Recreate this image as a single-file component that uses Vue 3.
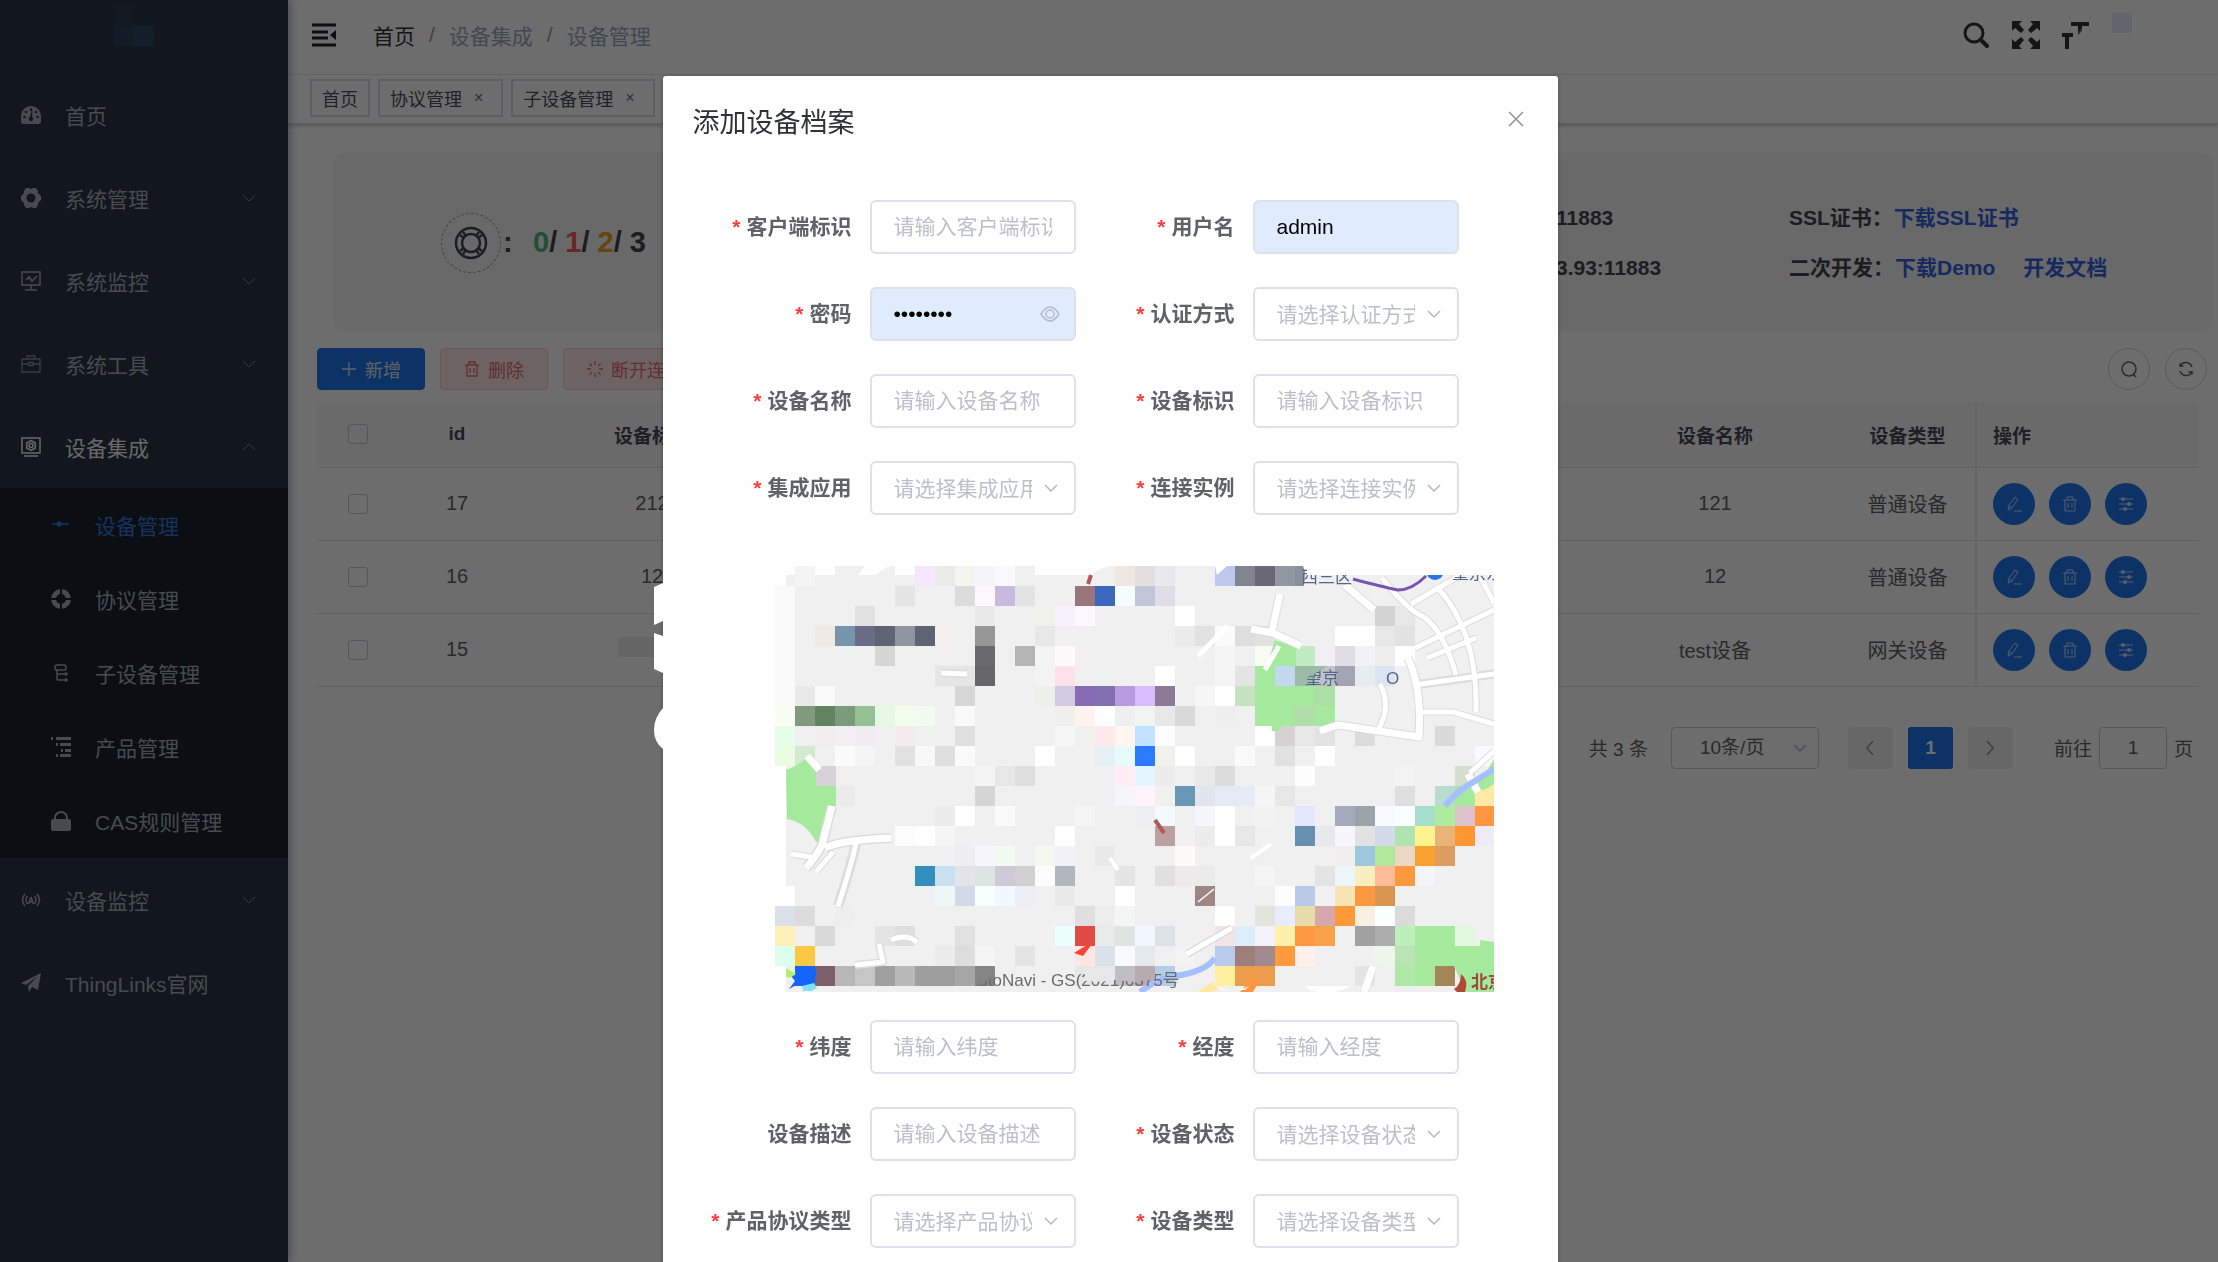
<script setup>
import { ref } from 'vue'

const topMenu = [
  { label: '首页', icon: 'dash' },
  { label: '系统管理', icon: 'gear', arrow: true },
  { label: '系统监控', icon: 'monitor', arrow: true },
  { label: '系统工具', icon: 'tool', arrow: true },
  { label: '设备集成', icon: 'device', arrow: true, open: true },
]
const subMenu = [
  { label: '设备管理', icon: 'link', active: true },
  { label: '协议管理', icon: 'ring' },
  { label: '子设备管理', icon: 'tree' },
  { label: '产品管理', icon: 'list' },
  { label: 'CAS规则管理', icon: 'lock' },
]
const lowMenu = [
  { label: '设备监控', icon: 'signal', arrow: true },
  { label: 'ThingLinks官网', icon: 'plane' },
]

const rows = [
  { id: 17, code: '212', name: '121', type: '普通设备' },
  { id: 16, code: '12', name: '12', type: '普通设备' },
  { id: 15, code: '', name: 'test设备', type: '网关设备' },
]

const topFields = [
  { id: 'client', label: '客户端标识', kind: 'text', ph: '请输入客户端标识', req: true },
  { id: 'user', label: '用户名', kind: 'text', ph: '请输入用户名', req: true, value: 'admin', filled: true },
  { id: 'pwd', label: '密码', kind: 'password', ph: '请输入密码', req: true, value: 'password', filled: true },
  { id: 'auth', label: '认证方式', kind: 'select', ph: '请选择认证方式', req: true },
  { id: 'name', label: '设备名称', kind: 'text', ph: '请输入设备名称', req: true },
  { id: 'code', label: '设备标识', kind: 'text', ph: '请输入设备标识', req: true },
  { id: 'app', label: '集成应用', kind: 'select', ph: '请选择集成应用', req: true },
  { id: 'conn', label: '连接实例', kind: 'select', ph: '请选择连接实例', req: true },
]
const bottomFields = [
  { id: 'lat', label: '纬度', kind: 'text', ph: '请输入纬度', req: true },
  { id: 'lng', label: '经度', kind: 'text', ph: '请输入经度', req: true },
  { id: 'desc', label: '设备描述', kind: 'text', ph: '请输入设备描述' },
  { id: 'state', label: '设备状态', kind: 'select', ph: '请选择设备状态', req: true },
  { id: 'proto', label: '产品协议类型', kind: 'select', ph: '请选择产品协议类型', req: true },
  { id: 'type', label: '设备类型', kind: 'select', ph: '请选择设备类型', req: true },
]
const pageSize = ref('10')

// Map tiles, one string per 20px row; each entry is column[-lastColumn]:colour
const tileRows = [
  '1:f4f4f4 3-5:f0f0f0 7:f7e7fc 8:e8ebe6 9:f2f4ee 10:f5f4f9 11:fafafa 12:f0f0f0 17:f0e6e2 18:e4dee0 19:e9e8ea 20-21:f0f0f0 22:bec7ed 23:80858f 24:686876 25:9198a2',
  '0:fafafa 6:e5e5e5 9:dcdcdc 10:fdf7fe 11:c8badf 12:e3e3e3 15:99757c 16:3b68bd 17:f6fdff 18:c0c5da 19:dedde8',
  '0:fafafa 4:e1e1e1 10:e9e9e9 13:f0f1e8 14:f6f1fd 15:fdf8fe 20:ffffff 30:d3d3d3 31:e7e7e7',
  '0:fafafa 2:efeae6 3:7695ad 4:696c87 5:5e6474 6:8f94a1 7:5e6474 8:f2efed 10:979797 13:e8e8e8 20:ebebeb 21:e2e2e2 22:fbfbfb 23:dedede 24:e2e2e2 28-29:ffffff 30:e7e7e7 31:e2e2e2',
  '0:fafafa 4:eef1ed 5:d6d6d6 6-7:f0f0ed 10:69696b 12:b4b4b4 13:f3f3f3 14:fffafa 22:f5f5f5 24:f8fbf3 26:c0ebc4 27:f1eff5 28:dfdee3 29:f2f1f6 30:eeefed 31:fefefe',
  '0:fafafa 8-9:e6e6e6 10:666668 13:f3f3f3 14:fce1ea 19:ffffff 22:f5f5f5 23:e4e4e4 24:a5e99d 25:c3d7ef 26:9dbba7 27:bfc3cb 28:a3a5b5 29:e6edf1 30:dbe5f3',
  '0:fafafa 1:e9e9e9 2:fafafa 9:d7d7d7 13:edf0e9 14:d1cae0 15:876bb5 16:8270b2 17:b79adf 18:d9bcff 19:8b7b98 21:f6f6f6 22:ffffff 23:c7e2c3 24-26:a5e99d 27:abdfa5',
  '0:f8fff5 1:7f9a7d 2:628460 3:7b9b7b 4:95c093 5:e4f8e2 6:f1feea 7:f1fcf0 9:f9f9f9 14:efefec 15:fff2ef 16:fffeff 17:efeff0 18:f2f4f2 19:e8e8e9 20:d9d9d9 22:eeeeee 24-25:a5e99d 26:b1ddab 27:a5e99d',
  '0:e4fee7 2:f2eef0 4:efedf2 6:f4ebee 9:e0e0e0 14:f6f6f6 16:ffe9ed 17:fff6f0 18:c1e3ff 19:fbfdff 24:fefefe 25:d5d3d2 26:e8e8e8 27:e3e3e3 29:dcdcdc 33:dadada',
  '0:e9fee0 1:d3ead0 3:fbfbfb 4:f5f5f5 6:e1e1e1 7:f8f8f8 8:dedede 9:fafafa 13:ffffff 16:e6f0f2 17:e9faff 18:2c7bff 19:f0f1ea 20:ffffff 23:fafafa 25:e1e1e1 27:ffffff 35:faf9fc',
  '2:d7d2d9 10:f4f4f4 11:e8e8e8 12:dedede 17:ffedf6 18:e4f5ff 19:ececec 21:e9e9e9 22:dcdcdc 26:fdfdfd 31:f3f3f3 34:d5dfcf',
  '2:a5e099 3:ebebec 10:d5d5d5 17:f6f5fa 18:fff4fa 20:6998b7 21:e1e5ee 22-23:e6eaf5 24:f5f5f5 25:e7e7e7 31:dfdfdf 33:b9dcd1 34:a5e99d 35:fde9a5',
  '8:ececec 9:ffffff 11:fafafa 15:f5f5f5 18:edf0f1 19:f4f9ff 21:f4f7fc 22:fdffff 24:f2f2f2 26:e4e6fe 28:a4aabd 29:9ba4ab 30:f7fbff 31:f8ffff 32:a6dece 33:afeb9c 34:ddc2cb 35:ff9740',
  '6:fcfcfc 7:ffffff 8:f5f5f5 14:ffffff 19:bba0a0 21:ececec 22:ffffff 23:e7e7e7 26:6790b0 27:e8e8ef 28:f7f7fb 29:e2e2e2 30:d3dae9 31:b0e3b2 32:fff38f 33:eab479 34:ff9632 35:eeeaf6',
  '9:eeedf2 10:f5f5fb 11:f3faef 13:f3f9f1 14:f2f1f8 16:e9e9e9 20:fffafa 28:f0eeee 29:9ec7dd 30:b2e899 31:ecd7c5 32:faa02f 33:dc9d5e',
  '7:3390be 8:c8e0ef 9:e3e3e9 10:dde5e3 11:cecbd7 12:d1d1d1 13:fdfcff 14:b2b7bf 17:e5e5e5 19:e0e0e0 20:eee9eb 21:ebebeb 24:f5f5f5 27:e4e4e4 28:ecf5fb 29:f9efbe 30:ffbb97 31:fd9a3b 32:f5f4fb',
  '0:fffffb 8:eef7f5 9:d4d9e9 10:f8ffff 11:f2f8ff 12:edeff5 14:e9e9e9 17:ffffff 21:9f8685 25:fdfcff 26:b9c9e7 28:f6e4b5 29:fc9842 30:d99650',
  '0:dbe0e9 1:dcdcdc 3:eeeeee 15:dfdfdf 16:ededed 17:f4f5f5 22:fffffb 24:e2e4de 25:e7edfd 26:e5dcaa 27:d5a9ab 28:ff9838 29:f8efe0 30:f9fffd 31:dbdbdb',
  '0:fff0ba 2:d9d9d9 5:e4e4e4 6:dfdfdf 9:e1e1e1 14:ecfefc 15:e14b45 16:e7ece9 17:dee4e2 18:f2f6ff 19:dde2e6 22:f4e3e4 23:dcedfc 24:f4f2f8 25:fff0ab 26:ff9840 27:f9a04b 29:a1a1a1 30:adadad 31:bdefba 32-33:a5e99d 34:e3f7e1',
  '0:dcffec 1:fac844 8:ececec 9:dddddd 10:f5f5f5 12:e4e4e4 15:ffe6e2 16:d9e2eb 17:f8faff 18:e4e9ec 20:f3f3f3 22:b9cbec 23:9e7e78 24:a28b8f 25:ff9b3d 26:fff0ec 30:eef6eb 31:bbe4b6 32-34:a5e99d',
  '1:1564fb 2:7e5e69 3:b7b7b7 4:c6c6c6 5:9f9f9f 6:b9b9b9 7-8:9e9e9e 9:a6a6a6 10:858585 15:e7e7e7 16:e5e5e5 17:bfbfc1 18:b8abb0 19:b3cde9 22:fdf1a0 23-24:eb9d4b 29:e4e4e4 31:afe9a7 32:a5e99d 33:a48555',
]
const tiles = tileRows.flatMap((line, r) =>
  line.split(' ').map((cell) => {
    const [span, colour] = cell.split(':')
    const [a, b = a] = span.split('-').map(Number)
    return { x: a * 20, y: r * 20, w: (b - a + 1) * 20, fill: '#' + colour }
  })
)
</script>

<template>
  <div class="app">
    <nav class="sidebar" aria-label="主菜单">
      <div class="logo">
        <svg width="60" height="60" viewBox="0 0 60 60" aria-hidden="true">
          <path fill="#2a3d49" d="M20 6h20v20H20z" />
          <path fill="#2c405a" d="M20 26h20v20H20z" />
          <path fill="#2b4860" d="M40 26h20v20H40z" />
        </svg>
      </div>
      <template v-for="(group, g) in [topMenu, subMenu, lowMenu]" :key="g">
        <ul :class="['menu', { sub: g === 1 }]">
          <li v-for="m in group" :key="m.label">
            <a href="#" :class="['item', { active: m.active, open: m.open }]">
              <svg class="mi" viewBox="0 0 20 20" aria-hidden="true">
                <template v-if="m.icon === 'dash'">
                  <path fill="currentColor" d="M10 1A10 10 0 0 0 0 11v6q0 2 2 2h16q2 0 2-2v-6A10 10 0 0 0 10 1z" />
                  <g fill="#283644"><circle cx="10" cy="4.500" r="1.300" /><circle cx="5" cy="7" r="1.300" /><circle cx="15" cy="7" r="1.300" /><circle cx="3.500" cy="12" r="1.300" /><circle cx="16.500" cy="12" r="1.300" /><path d="M10.500 6l1 .3-.5 5.500a2.300 2.300 0 1 1-2 0z" /></g>
                </template>
                <path v-else-if="m.icon === 'gear'" fill="currentColor" fill-rule="evenodd" d="M5 0h3l2 1 2-1h3l2 3v2l3 3v4l-3 3v2l-2 3h-3l-2-1-2 1H5l-2-3v-2l-3-3V8l3-3V3zM10 5.500a4.500 4.500 0 1 0 0 9 4.500 4.500 0 0 0 0-9z" />
                <path v-else-if="m.icon === 'monitor'" fill="none" stroke="currentColor" stroke-width="1.500" d="M1 1h18v13H1zM10 14v5M4 19h12M5 9l3-3 3 4 5-5" />
                <path v-else-if="m.icon === 'tool'" fill="none" stroke="currentColor" stroke-width="1.300" d="M1 5h18v13H1zM6 5V2h8v3M1 10h7m4 0h7M8 8.500h4v3H8z" opacity=".75" />
                <g v-else-if="m.icon === 'device'" fill="none" stroke="currentColor" stroke-width="1.500"><path d="M1 1h18v15H1zM3 19h14" /><path d="M10 3.500l4.300 2.500v5L10 13.500 5.700 11V6z" /><circle cx="10" cy="8.500" r="2" /></g>
                <g v-else-if="m.icon === 'link'"><path stroke="currentColor" stroke-width="1.500" d="M1 9h17" /><circle cx="8" cy="9" r="2.600" fill="currentColor" /></g>
                <g v-else-if="m.icon === 'ring'"><circle cx="10" cy="10" r="7.500" fill="none" stroke="currentColor" stroke-width="5" /><path stroke="#1a232d" stroke-width="2" d="M10 0v20M0 10h20" /></g>
                <g v-else-if="m.icon === 'tree'" fill="none" stroke="currentColor" stroke-width="1.500"><rect x="4" y="2" width="11" height="5" rx="2" /><path d="M6 7v9q0 1 1 1h7M7 11h8" /><circle cx="15" cy="11" r="1" /><circle cx="15" cy="17" r="1" /></g>
                <path v-else-if="m.icon === 'list'" fill="currentColor" d="M0 0h2v3H0zM5 0h15v3H5zM5 6h2v3H5zM9 6h11v3H9zM10 12h2v3h-2zM14 12h6v3h-6zM5 17h2v3H5zM9 17h11v3H9z" />
                <path v-else-if="m.icon === 'lock'" fill="currentColor" fill-rule="evenodd" d="M3 8V7a7 7 0 0 1 14 0v1h1q2 0 2 2v8q0 2-2 2H2q-2 0-2-2v-8q0-2 2-2zM5 8h10V7A5 5 0 0 0 5 7z" />
                <path v-else-if="m.icon === 'signal'" fill="none" stroke="currentColor" stroke-width="1.500" d="M4 4q-5 6 0 12M16 4q5 6 0 12M6.500 6q-3 4 0 8M13.500 6q3 4 0 8M10 7l-2.500 7M10 7l2.500 7M8 12h4" />
                <path v-else fill="currentColor" d="M20 0l-3 17-6-3-3 5-1-6L17 3 5 12l-5-2z" />
              </svg>
              <span>{{ m.label }}</span>
              <svg v-if="m.arrow" class="arrow" viewBox="0 0 14 14" aria-hidden="true">
                <path fill="none" stroke="currentColor" :d="m.open ? 'M1 10l6-6 6 6' : 'M1 4l6 6 6-6'" />
              </svg>
            </a>
          </li>
        </ul>
      </template>
    </nav>

    <main class="main">
      <header class="navbar">
        <svg class="fold" width="24" height="24" viewBox="0 0 24 24" aria-hidden="true">
          <path stroke="#202124" stroke-width="3" d="M0 2h24M0 9h16M0 15h16M0 22h24" />
          <path fill="#202124" d="M24 7v10l-6-5z" />
        </svg>
        <div class="crumbs">
          <a href="#" class="home">首页</a><i>/</i><span>设备集成</span><i>/</i><span>设备管理</span>
        </div>
        <div class="tools">
          <svg width="28" height="28" viewBox="0 0 28 28" aria-hidden="true"><circle cx="12" cy="12" r="9" fill="none" stroke="#333" stroke-width="3" /><path stroke="#333" stroke-width="4" stroke-linecap="round" d="M19 19l6 6" /></svg>
          <svg width="28" height="28" viewBox="0 0 28 28" fill="#333" aria-hidden="true"><path d="M0 0h10L7 3l5 6-3 3-6-5-3 3zM28 0H18l3 3-5 6 3 3 6-5 3 3zM0 28h10l-3-3 5-6-3-3-6 5-3-3zM28 28H18l3-3-5-6 3-3 6 5 3-3z" /></svg>
          <svg width="28" height="28" viewBox="0 0 28 28" fill="#333" aria-hidden="true"><path d="M9 1h18v4h-7v5l-4 4V5H9zM0 12h11v4H7v12H3V16H0z" /><path fill="#fff" fill-opacity=".3" d="M14 14l6-7h10v21H12z" /></svg>
          <span class="avatar"></span>
        </div>
      </header>

      <div class="tags">
        <a href="#" class="tag">首页</a>
        <a href="#" class="tag">协议管理<b>×</b></a>
        <a href="#" class="tag">子设备管理<b>×</b></a>
      </div>

      <section class="panel">
        <div class="status">
          <span class="dash">
            <svg width="34" height="34" viewBox="0 0 34 34" fill="none" stroke="#42454f" stroke-width="2.500" aria-hidden="true"><circle cx="17" cy="17" r="15" /><circle cx="17" cy="17" r="9" /><path d="M6 9l4 3M9 6l3 4M28 9l-4 3M25 6l-3 4M6 25l4-3M9 28l3-4M28 25l-4-3M25 28l-3-4" /></svg>
          </span>
          <span class="colon">:</span>
          <span class="counts"><em class="g">0</em>/ <em class="r">1</em>/ <em class="y">2</em>/ 3</span>
        </div>
        <div class="endpoints"><p>11883</p><p>3.93:11883</p></div>
        <div class="downloads">
          <p>SSL证书：<a href="#">下载SSL证书</a></p>
          <p>二次开发：<a href="#">下载Demo</a><a href="#" class="doc">开发文档</a></p>
        </div>
      </section>

      <div class="actions">
        <button type="button" class="btn primary">
          <svg width="16" height="16" viewBox="0 0 16 16" aria-hidden="true"><path stroke="currentColor" stroke-width="1.300" d="M1 8h14M8 1v14" /></svg>新增
        </button>
        <button type="button" class="btn danger">
          <svg width="16" height="16" viewBox="0 0 16 16" fill="none" stroke="currentColor" stroke-width="1.300" aria-hidden="true"><path d="M1 4h14M5 4V1h6v3M3 4v11h10V4M6 7v5M10 7v5" /></svg>删除
        </button>
        <button type="button" class="btn danger">
          <svg width="16" height="16" viewBox="0 0 16 16" stroke="currentColor" stroke-width="1.300" aria-hidden="true"><path d="M8 0v4M8 12v4M0 8h4M12 8h4M2.500 2.500l2.500 2.500M11 11l2.500 2.500M2.500 13.500L5 11M11 5l2.500-2.500" /></svg>断开连接
        </button>
        <button type="button" class="round first" aria-label="搜索">
          <svg width="18" height="18" viewBox="0 0 18 18" fill="none" stroke="currentColor" stroke-width="1.500" aria-hidden="true"><circle cx="9" cy="9" r="7" /><path d="M13 14l3 3" /></svg>
        </button>
        <button type="button" class="round" aria-label="刷新">
          <svg width="18" height="18" viewBox="0 0 18 18" fill="none" stroke="currentColor" stroke-width="1.500" aria-hidden="true"><path d="M3 7V3.500M3 6h3.500M3 6a6.500 6.500 0 0 1 12 1M15 11v3.500M15 12h-3.500M15 12a6.500 6.500 0 0 1-12-1" /></svg>
        </button>
      </div>

      <table class="grid">
        <colgroup><col class="c1" /><col class="c2" /><col class="c3" /><col /><col class="c5" /><col class="c6" /><col class="c7" /></colgroup>
        <thead>
          <tr>
            <th><input type="checkbox" aria-label="全选" /></th>
            <th>id</th><th>设备标识</th><th></th><th>设备名称</th><th>设备类型</th><th class="ops">操作</th>
          </tr>
        </thead>
        <tbody>
          <tr v-for="r in rows" :key="r.id">
            <td><input type="checkbox" :aria-label="'选择 ' + r.id" /></td>
            <td>{{ r.id }}</td>
            <td><span v-if="r.code">{{ r.code }}</span><span v-else class="masked"></span></td>
            <td></td>
            <td>{{ r.name }}</td>
            <td>{{ r.type }}</td>
            <td class="ops">
              <div class="circles">
                <button type="button" aria-label="编辑"><svg viewBox="0 0 16 16" aria-hidden="true"><path d="M2 14l1-5 6-8 3 2-6 9zM3 9.500l3 2.500M8 15h8" /></svg></button>
                <button type="button" aria-label="删除"><svg viewBox="0 0 16 16" aria-hidden="true"><path d="M1 4h14M5 4V1h6v3M3 4v11h10V4M6 7v5M10 7v5" /></svg></button>
                <button type="button" aria-label="设置"><svg viewBox="0 0 16 16" aria-hidden="true"><path d="M1 3h14M1 8h14M1 13h14" /><g fill="#c8dcff" stroke="none"><circle cx="5" cy="3" r="2" /><circle cx="11" cy="8" r="2" /><circle cx="7" cy="13" r="2" /></g></svg></button>
              </div>
            </td>
          </tr>
        </tbody>
      </table>

      <div class="pager">
        <span>共 3 条</span>
        <span class="size">
          <select v-model="pageSize" aria-label="每页条数"><option value="10">10条/页</option><option value="20">20条/页</option></select>
          <svg class="chev" viewBox="0 0 14 14" aria-hidden="true"><path d="M1 4l6 6 6-6" /></svg>
        </span>
        <button type="button" class="pg" aria-label="上一页"><svg width="14" height="18" viewBox="0 0 14 18" aria-hidden="true"><path d="M10 2L4 9l6 7" /></svg></button>
        <button type="button" class="pg on">1</button>
        <button type="button" class="pg" aria-label="下一页"><svg width="14" height="18" viewBox="0 0 14 18" aria-hidden="true"><path d="M4 2l6 7-6 7" /></svg></button>
        <label class="jump">前往<input type="text" value="1" />页</label>
      </div>
    </main>

    <div class="overlay">
      <div class="dialog" role="dialog" aria-label="添加设备档案">
        <svg class="edge" width="9" height="170" viewBox="0 0 9 170" aria-hidden="true">
          <path fill="#fff" d="M0 4l9-4v38l-9 4zM0 50l9 3v37l-9-4zM9 125q-9 10-9 22t9 19z" />
        </svg>
        <div class="head">
          <h1>添加设备档案</h1>
          <button type="button" class="close" aria-label="关闭"><svg width="16" height="16" viewBox="0 0 16 16" aria-hidden="true"><path fill="none" stroke="#909399" stroke-width="1.500" d="M1 1l14 14M15 1L1 15" /></svg></button>
        </div>
        <form @submit.prevent>
          <template v-for="(fields, f) in [topFields, bottomFields]" :key="f">
            <div class="fields">
              <div v-for="x in fields" :key="x.id" class="field">
                <label :for="x.id"><i v-if="x.req">*</i>{{ x.label }}</label>
                <div class="ctl">
                  <select v-if="x.kind === 'select'" :id="x.id"><option value="">{{ x.ph }}</option></select>
                  <input v-else :id="x.id" :type="x.kind" :placeholder="x.ph" :value="x.value" :class="{ filled: x.filled }" />
                  <svg v-if="x.kind === 'select'" class="chev" viewBox="0 0 14 14" aria-hidden="true"><path d="M1 4l6 6 6-6" /></svg>
                  <svg v-if="x.kind === 'password'" class="eye" viewBox="0 0 20 16" aria-hidden="true"><path d="M1 8q9-14 18 0-9 14-18 0z" /><circle cx="10" cy="8" r="4" /></svg>
                </div>
              </div>
            </div>

            <svg v-if="f === 0" class="map" width="719" height="426" viewBox="0 0 719 426" role="img" aria-label="地图">
              <path fill="#f0f0f0" d="M11 9H719V426H11z" />
              <path fill="#fff" d="M257 0H400V9H257z" />
              <path fill="#f0f0f0" d="M316 9q10-9 24-9v20h-24z" />
              <rect v-for="(t, i) in tiles" :key="i" :x="t.x" :y="t.y" :width="t.w" height="20" :fill="t.fill" />
              <path fill="#8a909b" d="M520 0h8l2 5-1 15h-9z" />
              <path fill="#fff" d="M90 0h24l-14 9H83zM440 0h12l-10 9z" />

              <!-- parks -->
              <path fill="#a5e99d" d="M11 204q12-4 20-12l10 8v20h20v20h-5l-10 36h-5q-10-20-29-23z" />
              <path fill="#d7d2d9" d="M41 202l8-2h12v20H41z" />
              <path fill="#a5e99d" d="M500 74l21 7v19h-21l-8 20v-20zM497 160h10l-4 5h-6zM705 374l14 2v50h-34v-12l-6-14h-22v-20h48zM719 193v27l-20 7-6 13h-15l10-20 22-12z" />

              <!-- roads -->
              <g fill="none" stroke="#dcdcdc" stroke-linejoin="round">
                <path stroke-width="10" d="M57 240l-10 39q-6 12-16 23M50 282q15-8 66-10M81 277q-4 20-18 63" />
                <path stroke-width="9" d="M505 28l-8 37M476 63l22 4 28 13M570 19q14 12 29 25M633 92q14 30 11 79l-81-12-18 6M639 119l80-11" />
                <path stroke-width="7" d="M16 288l26 4M41 306l17-20M636 38l48-28M607 12q25 32 42 39 20 15 32 58M661 20q42 44 40 126M640 82l79-38M652 92l49-20M605 118q12 22-2 46M648 146h30l41 12M706 12l13 25M719 185l-24 22" />
                <path stroke-width="8" d="M693 208l10 18M598 400l-9 26M412 388l45-26M80 399l28-3-4-18M116 374q15-7 26 2M166 107l26 1" />
              </g>
              <g fill="none" stroke="#fff" stroke-linejoin="round">
                <path stroke-width="7" d="M57 240l-10 39q-6 12-16 23M50 282q15-8 66-10M505 28l-8 37M476 63l22 4 28 13M570 19q14 12 29 25M633 92q14 30 11 79l-81-12-18 6M693 208l10 18M598 400l-9 26M32 190l12 14" />
                <path stroke-width="5" d="M81 277q-4 20-18 63M16 288l26 4M41 306l17-20M636 38l48-28M607 12q25 32 42 39 20 15 32 58M661 20q42 44 40 126M640 82l79-38M652 92l49-20M605 118q12 22-2 46M648 146h30l41 12M706 12l13 25M719 185l-24 22M639 119l80-11M412 388l45-26M80 399l28-3-4-18M116 374q15-7 26 2M166 107l26 1M490 104l14-24M423 90l30-30" />
                <path stroke-width="4" d="M335 292l8 12M476 292l20-14" />
              </g>
              <path fill="none" stroke="#a5c0ff" stroke-width="6" d="M365 426q18-14 35-16 30-4 40-18M670 240q10-14 30-25l19-12" />
              <path fill="#ffe9a0" d="M422 426l15-10 7 7-8 3zM707 226l12-8v10z" />
              <path fill="#ff9740" d="M465 426l11-13 10-1-8 14z" />
              <path fill="none" stroke="#7a55b0" stroke-width="3" d="M578 13q30 8 45 11 14 0 28-14" />
              <circle cx="660" cy="5" r="9" fill="#2c73e8" />
              <path stroke="#b05a5a" stroke-width="4" d="M313 18l3-9M380 254l9 13" />
              <path stroke="#fff" stroke-width="1.500" d="M423 336l16-13" />
              <path fill="#fb4438" d="M299 387l21-13-12 16z" />
              <path fill="#1564fb" d="M16 410l24-8 2 8-10 6 2 6-9-5-11 6 6-8z" />
              <path fill="#7fe3ff" d="M27 420l12-3 3 5-6 3h-8z" />
              <path fill="#b3f070" d="M11 402l10 6-6 4-4-1z" />
              <path fill="#fff" d="M530 420h45q-8 6-20 6h-10q-10 0-15-6zM440 420q20 8 34 0l-4 4h-22z" />

              <!-- place names -->
              <g class="place">
                <text x="526" y="17">西三区</text>
                <text x="677" y="13">望京东</text>
                <text x="530" y="118">望京</text>
                <text x="611" y="118">O</text>
              </g>
              <path fill="#fff" d="M532 0h187v9H532z" />
              <path fill="#9dbba7" d="M528 100h25l-25 14z" />
              <text class="credit" x="192" y="420">AutoNavi - GS(2021)6375号</text>
              <path fill="#a6a6a6" d="M180 400h20v20h-20z" />
              <path fill="#858585" d="M200 400h20l-4 12-16 8z" />
              <path fill="#e7e7e7" d="M310 400h30v14q-14 3-30 1z" />
              <path fill="#bfbfc1" d="M340 400h20v16l-20-2z" />
              <path fill="#b8abb0" d="M360 400h20v13l-20 3z" />
              <path fill="#b04a36" d="M686 408q8 6 4 18h-8l-3-3q7-4 7-15z" />
              <text class="rail" x="696" y="422">北京</text>
            </svg>
          </template>
        </form>
      </div>
    </div>
  </div>
</template>

<style>
body {
  background: #fff;
}
</style>

<style scoped>
.app {
  display: flex;
  min-height: 100vh;
  font-family: "Liberation Sans", "Noto Sans CJK SC", sans-serif;
  font-size: 20px;
  color: #606266;
}
.app * {
  box-sizing: border-box;
}
button,
input,
select {
  font-family: inherit;
}
a {
  color: inherit;
  text-decoration: none;
}
i,
em {
  font-style: normal;
}

/* sidebar */
.sidebar {
  position: relative;
  z-index: 1;
  flex: 0 0 288px;
  background: #283644;
  box-shadow: 2px 0 9px rgba(0, 21, 41, 0.35);
}
.logo {
  height: 73px;
  padding-left: 94px;
}
.menu {
  list-style: none;
  margin: 0;
  padding: 0;
}
.item {
  display: flex;
  align-items: center;
  height: 83px;
  padding: 0 32px 0 21px;
  font-size: 21px;
  color: #a6adb8;
}
.item.open {
  color: #f4f4f5;
}
.mi {
  width: 20px;
  height: 20px;
  margin-right: 24px;
  flex: none;
}
.arrow {
  width: 14px;
  height: 14px;
  margin-left: auto;
  color: #7d8590;
}
.sub {
  background: #1a232d;
}
.sub .item {
  height: 74px;
  padding-left: 51px;
}
.sub .item.active {
  color: #3278dc;
}

/* top bars */
.main {
  flex: 1;
  min-width: 0;
}
.navbar {
  display: flex;
  align-items: center;
  height: 75px;
  padding: 0 86px 4px 24px;
  border-bottom: 1px solid #f0f0f2;
}
.crumbs {
  display: flex;
  align-items: center;
  margin-left: 37px;
  font-size: 21px;
  color: #97a8be;
}
.crumbs .home {
  color: #303133;
}
.crumbs i {
  margin: 0 14px;
  color: #999;
}
.tools {
  display: flex;
  gap: 22px;
  margin-left: auto;
}
.avatar {
  width: 20px;
  height: 20px;
  margin-top: -8px;
  background: #e6edff;
}
.tags {
  display: flex;
  gap: 8px;
  height: 49px;
  padding: 4px 22px;
  border-bottom: 1px solid #d8dce5;
  box-shadow: 0 2px 4px rgba(0, 0, 0, 0.2);
}
.tag {
  display: flex;
  align-items: center;
  height: 38px;
  padding: 0 10px;
  border: 2px solid #d8dce5;
  font-size: 18px;
  color: #495060;
}
.tag b {
  margin: 0 8px 0 12px;
  font-size: 16px;
  font-weight: 400;
  color: #70757f;
}

/* info panel */
.panel {
  display: flex;
  align-items: center;
  height: 179px;
  margin: 29px 5px 0 45px;
  padding: 0 109px 0 108px;
  border-radius: 12px;
  background: #f6f6f6;
  font-size: 21px;
  font-weight: 700;
  color: #42454f;
}
.status {
  display: flex;
  align-items: center;
  flex: 1;
  font-size: 29px;
}
.dash {
  display: grid;
  place-items: center;
  width: 60px;
  height: 60px;
  border: 1px dashed #999;
  border-radius: 50%;
}
.colon {
  width: 32px;
  padding-left: 2px;
}
.g {
  color: #4cb97c;
}
.r {
  color: #f05a5e;
}
.y {
  color: #e6a020;
}
.endpoints {
  width: 233px;
}
.downloads {
  width: 315px;
}
.panel p {
  margin: 0;
  line-height: 50px;
  white-space: nowrap;
}
.downloads a {
  margin-left: 1px;
  color: #3564de;
}
.downloads .doc {
  margin-left: 28px;
}

/* action bar */
.actions {
  display: flex;
  gap: 15px;
  padding: 16px 11px 12px 29px;
}
.btn {
  display: flex;
  align-items: center;
  justify-content: center;
  gap: 8px;
  height: 42px;
  padding: 0 23px;
  border: 1px solid;
  border-radius: 4px;
  font-size: 18px;
}
.primary {
  background: #1f76ee;
  border-color: #1f76ee;
  color: #e4e8f0;
}
.danger {
  background: #ffe8e8;
  border-color: #ffc8c8;
  color: #e66c6c;
}
.round {
  display: grid;
  place-items: center;
  width: 42px;
  height: 42px;
  padding: 0;
  border: 1px solid #d0d2d6;
  border-radius: 50%;
  background: none;
  color: #606266;
}
.round.first {
  margin-left: auto;
}

/* table */
.grid {
  width: calc(100% - 48px);
  margin-left: 29px;
  border-collapse: collapse;
  table-layout: fixed;
  text-align: center;
}
.c1 {
  width: 82px;
}
.c2 {
  width: 116px;
}
.c3 {
  width: 274px;
}
.c5 {
  width: 250px;
}
.c6 {
  width: 136px;
}
.c7 {
  width: 223px;
}
.grid th {
  height: 65px;
  padding: 0;
  background: #f8f8f9;
  border-bottom: 1px solid #dce3ea;
  font-size: 19px;
  color: #484b58;
}
.grid td {
  height: 73px;
  padding: 0;
  border-bottom: 1px solid #dfe3e8;
}
.grid .ops {
  padding-left: 16px;
  text-align: left;
  border-left: 2px solid #ececec;
}
.grid input {
  appearance: none;
  display: block;
  width: 20px;
  height: 20px;
  margin: 0 auto;
  border: 1px solid #c8cad0;
  border-radius: 3px;
}
.masked {
  display: inline-block;
  width: 66px;
  height: 20px;
  background: #ececec;
}
.circles {
  display: flex;
  gap: 14px;
}
.circles button {
  display: grid;
  place-items: center;
  width: 42px;
  height: 42px;
  padding: 0;
  border: 0;
  border-radius: 50%;
  background: #1f76ee;
}
.circles svg {
  width: 16px;
  height: 16px;
  fill: none;
  stroke: #c8dcff;
  stroke-width: 1px;
}

/* pagination */
.pager {
  display: flex;
  align-items: center;
  justify-content: flex-end;
  gap: 15px;
  padding: 40px 25px 0 0;
  font-size: 19px;
}
.size {
  position: relative;
  margin: 0 14px 0 8px;
}
.size select {
  appearance: none;
  width: 148px;
  height: 42px;
  padding: 0 54px 0 28px;
  border: 1px solid #c8cad0;
  border-radius: 4px;
  background: none;
  font-size: 19px;
  color: #606266;
}
.chev {
  position: absolute;
  top: 50%;
  right: 18px;
  width: 14px;
  height: 14px;
  margin-top: -7px;
  fill: none;
  stroke: #b4b8c0;
  stroke-width: 1.500px;
  pointer-events: none;
}
.size .chev {
  right: 12px;
}
.pg {
  display: grid;
  place-items: center;
  width: 45px;
  height: 42px;
  padding: 0;
  border: 0;
  border-radius: 3px;
  background: #f2f2f3;
  font-size: 19px;
}
.pg svg {
  fill: none;
  stroke: #909399;
  stroke-width: 1.500px;
}
.pg.on {
  background: #1f76ee;
  color: #fff;
  font-weight: 700;
}
.jump {
  display: flex;
  align-items: center;
  gap: 7px;
  margin-left: 26px;
}
.jump input {
  width: 68px;
  height: 42px;
  border: 1px solid #c8cad0;
  border-radius: 4px;
  background: none;
  text-align: center;
  font-size: 19px;
  color: #606266;
}

/* dialog */
.overlay {
  position: fixed;
  inset: 0;
  z-index: 5;
  display: flex;
  justify-content: center;
  align-items: flex-start;
  overflow: hidden;
  background: rgba(0, 0, 0, 0.573);
}
.dialog {
  position: relative;
  width: 895px;
  max-width: 100%;
  min-width: 0;
  margin: 76px 0 0 2px;
  padding-bottom: 80px;
  border-radius: 3px;
  background: #fff;
  box-shadow: 0 1px 4px rgba(0, 0, 0, 0.3);
}
.edge {
  position: absolute;
  top: 507px;
  left: -9px;
}
.head {
  display: flex;
  justify-content: space-between;
  height: 124px;
  padding: 28px 34px 0 30px;
}
h1 {
  margin: 0;
  font-size: 27px;
  font-weight: 400;
  line-height: 38px;
  color: #303133;
}
.close {
  display: grid;
  width: 16px;
  height: 30px;
  padding: 0;
  border: 0;
  background: none;
  place-items: center;
}
form {
  padding: 0 99px 0 30px;
}
.fields {
  display: grid;
  grid-template-columns: 1fr 1fr;
  row-gap: 33px;
}
.field {
  display: flex;
  align-items: center;
}
.field label {
  flex: 1;
  padding-right: 18px;
  text-align: right;
  white-space: nowrap;
  font-size: 21px;
  font-weight: 700;
  line-height: 28px;
  color: #606266;
}
.field label i {
  margin-right: 6px;
  color: #ff3b3b;
}
.ctl {
  position: relative;
  width: 206px;
}
.ctl input,
.ctl select {
  appearance: none;
  display: block;
  width: 100%;
  height: 54px;
  padding: 0 22px;
  border: 2px solid #dfe1e8;
  border-radius: 6px;
  background: #fff;
  font-size: 21px;
  color: #000;
}
.ctl select {
  padding-right: 42px;
  color: #bcc0c9;
}
.ctl input::placeholder {
  color: #bcc0c9;
}
.ctl .filled {
  background: #e1ebfe;
}
.eye {
  position: absolute;
  top: 19px;
  right: 16px;
  width: 20px;
  height: 16px;
  fill: none;
  stroke: #b4bccb;
  stroke-width: 1.500px;
}
.map {
  display: block;
  margin: 51px 0 28px 82px;
}
.place {
  font-size: 17px;
  fill: #56658a;
}
.credit {
  font-size: 17px;
  fill: #6b6b6b;
}
.rail {
  font-size: 17px;
  font-weight: 700;
  fill: #9b4a3c;
}
</style>
